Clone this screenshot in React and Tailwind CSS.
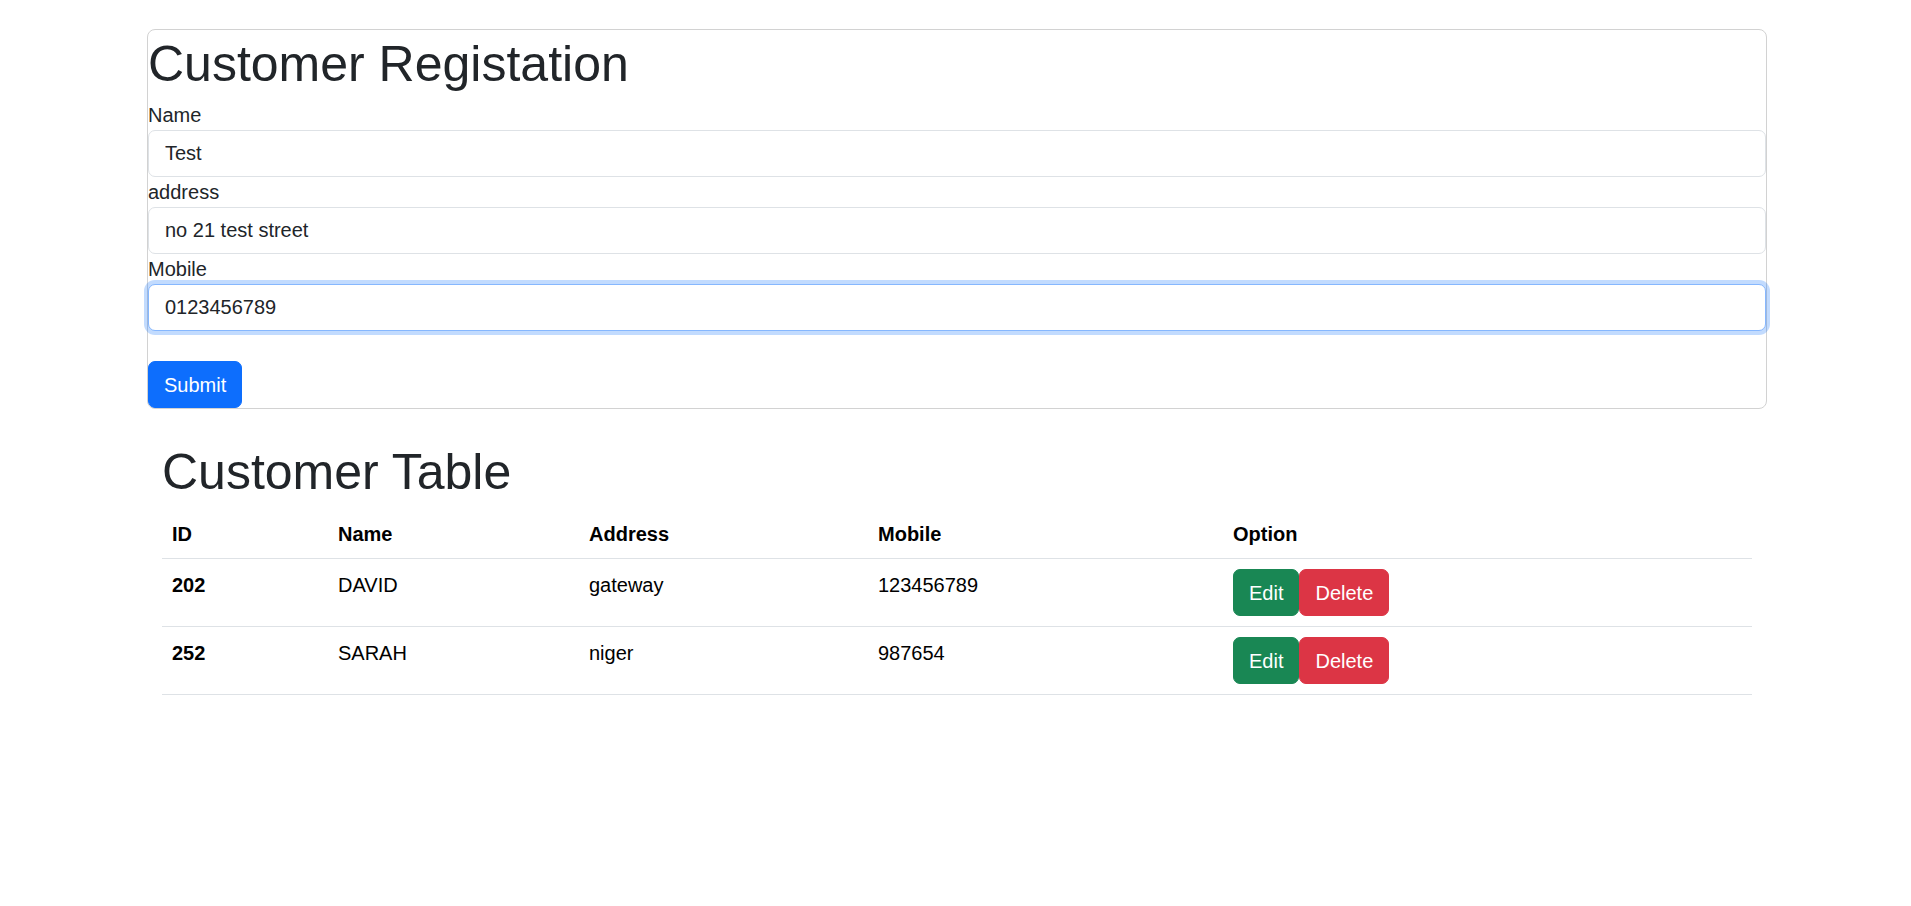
const customers = [
  { id: 202, name: 'DAVID', address: 'gateway', mobile: '123456789' },
  { id: 252, name: 'SARAH', address: 'niger', mobile: '987654' },
];

const cols = 'grid grid-cols-[166px_251px_289px_355px_529px]';

function Field({ label, value, focused }) {
  return (
    <div>
      <label className="block leading-[30px]">{label}</label>
      <input
        type="text"
        readOnly
        value={value}
        className={
          'block h-[47px] w-full rounded-[7px] border bg-white px-[16px] text-[20px] text-[#212529] outline-none ' +
          (focused
            ? 'border-[#86b7fe] shadow-[0_0_0_4px_rgba(13,110,253,0.25)]'
            : 'border-[#dee2e6]')
        }
      />
    </div>
  );
}

export default function App() {
  return (
    <div className="min-h-screen bg-white pt-[29px] text-[20px] text-[#212529] font-['Liberation_Sans',Arial,sans-serif]">
      {/* Registration form */}
      <div className="ml-[147px] w-[1620px] rounded-[8px] border border-[#d2d2d2]">
        <h1 className="mt-[4px] mb-[6px] text-[50px] leading-[60px] font-normal">Customer Registation</h1>
        <Field label="Name" value="Test" />
        <Field label="address" value="no 21 test street" />
        <Field label="Mobile" value="0123456789" focused />
        <div className="h-[30px]" />
        <button className="h-[47px] rounded-[7px] border border-[#0d6efd] bg-[#0d6efd] px-[15px] text-white">Submit</button>
      </div>

      {/* Table */}
      <div className="ml-[162px] mt-[33px] w-[1590px]">
        <h1 className="mb-[7px] text-[50px] leading-[60px] font-normal">Customer Table</h1>
        <div className="text-black">
          <div className={cols + ' h-[50px] border-b border-[#dee2e6] pt-[10px] font-bold leading-[30px]'}>
            <div className="pl-[10px]">ID</div>
            <div className="pl-[10px]">Name</div>
            <div className="pl-[10px]">Address</div>
            <div className="pl-[10px]">Mobile</div>
            <div className="pl-[10px]">Option</div>
          </div>
          {customers.map((c) => (
            <div key={c.id} className={cols + ' h-[68px] items-start border-b border-[#dee2e6] leading-[30px]'}>
              <div className="pl-[10px] pt-[11px] font-bold">{c.id}</div>
              <div className="pl-[10px] pt-[11px]">{c.name}</div>
              <div className="pl-[10px] pt-[11px]">{c.address}</div>
              <div className="pl-[10px] pt-[11px]">{c.mobile}</div>
              <div className="flex pl-[10px] pt-[10px]">
                <button className="h-[47px] rounded-[7px] border border-[#198754] bg-[#198754] px-[15px] text-white">Edit</button>
                <button className="h-[47px] rounded-[7px] border border-[#dc3545] bg-[#dc3545] px-[15px] text-white">Delete</button>
              </div>
            </div>
          ))}
        </div>
      </div>
    </div>
  );
}
